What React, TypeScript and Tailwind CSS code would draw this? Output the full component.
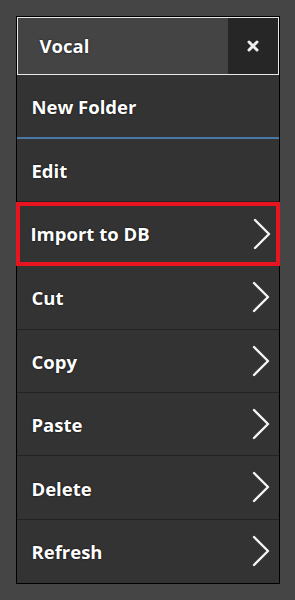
import React from "react";

const Chevron = () => (
  <svg width="20" height="32" viewBox="0 0 20 32" className="shrink-0">
    <path d="M3 2 L17 16 L3 30" fill="none" stroke="#f5f5f5" strokeWidth="2.4" strokeLinecap="round" strokeLinejoin="round" />
  </svg>
);

const txt = "text-[18.5px] font-bold text-white [text-shadow:0_0_2px_rgba(0,0,0,0.9)]";

const Row = ({ label, chevron, last }: { label: string; chevron?: boolean; last?: boolean }) => (
  <div className={`flex h-[64px] items-center justify-between pl-[15px] pr-[8px] ${last ? "" : "border-b border-[#222]"}`}>
    <span className={`${txt} translate-y-[1px]`}>{label}</span>
    {chevron && <Chevron />}
  </div>
);

export default function App() {
  return (
    <div className="flex h-[600px] w-[295px] justify-center bg-[#454545] pt-[16px] font-['Open_Sans',sans-serif]">
      <div className="flex h-[568px] w-[264px] flex-col border border-black bg-[#333]">
        <div className="flex h-[59px] border border-[#e8e8e8] bg-[#444]">
          <div className={`flex flex-1 items-center pl-[22px] ${txt}`}>Vocal</div>
          <div className="flex w-[50px] items-center justify-center bg-[#262626]">
            <svg width="12" height="12" viewBox="0 0 12 12">
              <path d="M2 2 L10 10 M10 2 L2 10" stroke="#eee" strokeWidth="3" strokeLinecap="round" />
            </svg>
          </div>
        </div>
        <div className="flex h-[64px] items-center border-b-2 border-[#4a79a8] pl-[15px]">
          <span className={`${txt} translate-y-[1px]`}>New Folder</span>
        </div>
        <Row label="Edit" />
        <div className="border-[4px] border-[#e8141f] -mx-px">
          <div className="flex h-[56px] items-center justify-between pl-[11px] pr-[4px]">
            <span className={txt}>Import to DB</span>
            <Chevron />
          </div>
        </div>
        <Row label="Cut" chevron />
        <Row label="Copy" chevron />
        <Row label="Paste" chevron />
        <Row label="Delete" chevron />
        <Row label="Refresh" chevron last />
      </div>
    </div>
  );
}
